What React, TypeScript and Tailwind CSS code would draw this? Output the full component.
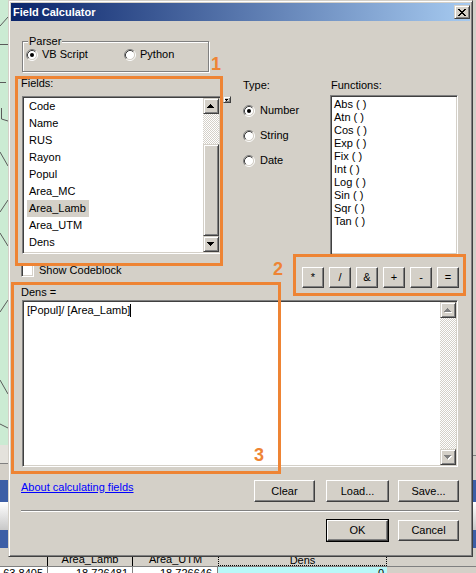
import React from "react";

const raised =
  "border border-t-white border-l-white border-r-[#404040] border-b-[#404040] shadow-[inset_-1px_-1px_0_#808080] bg-[#D4D0C8]";
const sbRaised =
  "border border-t-[#D4D0C8] border-l-[#D4D0C8] border-r-[#404040] border-b-[#404040] shadow-[inset_1px_1px_0_#ffffff,inset_-1px_-1px_0_#808080] bg-[#D4D0C8]";
const sunken =
  "border border-t-[#808080] border-l-[#808080] border-r-white border-b-white shadow-[inset_1px_1px_0_#404040,inset_-1px_-1px_0_#D4D0C8] p-px bg-white";
const hatch =
  "bg-[repeating-conic-gradient(#d4d0c8_0%_25%,#ffffff_0%_50%)] bg-size-[2px_2px]";

function Arrow({ dir, disabled }: { dir: "up" | "down"; disabled?: boolean }) {
  const d =
    dir === "up"
      ? "M3 0h1v1H3z M2 1h3v1H2z M1 2h5v1H1z M0 3h7v1H0z"
      : "M0 0h7v1H0z M1 1h5v1H1z M2 2h3v1H2z M3 3h1v1H3z";
  return (
    <svg width="8" height="5" viewBox="0 0 8 5" shapeRendering="crispEdges">
      {disabled && <path d={d} fill="#ffffff" transform="translate(1,1)" />}
      <path d={d} fill={disabled ? "#808080" : "#000000"} />
    </svg>
  );
}

function Radio({ checked }: { checked?: boolean }) {
  return (
    <svg width="12" height="12" viewBox="0 0 12 12" className="shrink-0">
      <circle cx="6" cy="6" r="4.5" fill="#ffffff" />
      <path d="M2.11 9.89A5.5 5.5 0 0 1 9.89 2.11" fill="none" stroke="#808080" />
      <path d="M9.89 2.11A5.5 5.5 0 0 1 2.11 9.89" fill="none" stroke="#ffffff" />
      <path d="M2.82 9.18A4.5 4.5 0 0 1 9.18 2.82" fill="none" stroke="#404040" />
      <path d="M9.18 2.82A4.5 4.5 0 0 1 2.82 9.18" fill="none" stroke="#D4D0C8" />
      {checked && <circle cx="6" cy="6" r="2" fill="#000000" />}
    </svg>
  );
}

function LeftStrip() {
  return (
    <div className="w-[8px] flex flex-col">
      <div className="h-[445px] bg-[#CBEBD3]">
        <svg width="8" height="445" viewBox="0 0 8 445">
          <g stroke="#5a5a5a" strokeWidth="1" fill="none">
            <path d="M0 26L8 17" />
            <path d="M0 44.5H8" />
            <path d="M0 82.5H6" />
            <path d="M1.5 108V119L8 121" />
            <path d="M0 152L8 166" />
            <path d="M8 200L0 212" />
            <path d="M0 233L8 246" />
            <path d="M8 300L0 312" />
            <path d="M0 380L8 394" />
            <path d="M0 424L8 428" />
          </g>
        </svg>
      </div>
      <div className="h-[18px] bg-[#E4E2DC]" />
      <div className="h-[1px] bg-[#808080]" />
      <div className="h-[16px] bg-[#D4D0C8]" />
      <div className="h-[22px] bg-[#3C5EA6]" />
      <div className="h-[28px] bg-[linear-gradient(to_bottom,#ffffff,#c8c8c8)]" />
      <div className="h-[18px] bg-[#3C5EA6]" />
      <div className="h-[9px] bg-[#D4D0C8]" />
    </div>
  );
}

function RightStrip() {
  return (
    <div className="w-[3px] flex flex-col">
      <div className="h-[455px] bg-[#D4D0C8]" />
      <div className="h-[1px] bg-[#808080]" />
      <div className="h-[24px] bg-[#D4D0C8]" />
      <div className="h-[22px] bg-[#3C5EA6]" />
      <div className="h-[28px] bg-[linear-gradient(to_bottom,#ffffff,#c8c8c8)]" />
      <div className="h-[18px] bg-[#3C5EA6]" />
      <div className="h-[9px] bg-[#D4D0C8]" />
    </div>
  );
}

const fields = ["Code", "Name", "RUS", "Rayon", "Popul", "Area_MC", "Area_Lamb", "Area_UTM", "Dens"];
const funcs = ["Abs ( )", "Atn ( )", "Cos ( )", "Exp ( )", "Fix ( )", "Int ( )", "Log ( )", "Sin ( )", "Sqr ( )", "Tan ( )"];
const ops = ["*", "/", "&", "+", "-", "="];

function Dialog() {
  return (
    <div className="w-[465px] h-[557px] flex flex-col bg-[#D4D0C8] border border-t-[#D4D0C8] border-l-[#D4D0C8] border-r-[#404040] border-b-[#404040] shadow-[inset_1px_1px_0_#ffffff,inset_-1px_-1px_0_#808080] p-[2px]">
      {/* title bar */}
      <div className="h-[18px] flex items-center pl-[2px] bg-[linear-gradient(to_right,#0a246a,#a6caf0)]">
        <span className="font-bold text-white">Field Calculator</span>
        <div className={`ml-auto w-[16px] h-[14px] ${sbRaised} flex items-center justify-center`}>
          <svg width="8" height="7" viewBox="0 0 8 7" shapeRendering="crispEdges">
            <path
              d="M0 0h2v1H0z M6 0h2v1H6z M1 1h2v1H1z M5 1h2v1H5z M2 2h4v1H2z M3 3h2v1H3z M2 4h4v1H2z M1 5h2v1H1z M5 5h2v1H5z M0 6h2v1H0z M6 6h2v1H6z"
              fill="#000000"
            />
          </svg>
        </div>
      </div>

      {/* body */}
      <div className="flex flex-col pl-[10px] pr-[11px]">
        {/* Parser group */}
        <div className="relative mt-[20px] ml-px w-[187px] h-[31px] border border-[#808080] shadow-[inset_1px_1px_0_#ffffff,1px_1px_0_#ffffff]">
          <span className="absolute left-[5px] -top-[7px] px-px bg-[#D4D0C8]">Parser</span>
          <div className="flex items-center pt-[6px] pl-[3px]">
            <div className="flex items-center gap-[4px] w-[98px]">
              <Radio checked />
              <span>VB Script</span>
            </div>
            <div className="flex items-center gap-[4px]">
              <Radio />
              <span>Python</span>
            </div>
          </div>
        </div>

        {/* fields / type / functions */}
        <div className="flex items-start mt-[5px]">
          <div className="w-[200px] flex flex-col">
            <div>Fields:</div>
            <div className={`mt-[6px] ml-px w-[199px] h-[158px] ${sunken} flex`}>
              <div className="flex-1 flex flex-col">
                {fields.map((f) => (
                  <div key={f} className="h-[17px] leading-[17px] pl-[3px]">
                    <span
                      className={`inline-block pl-[2px] pr-[3px] ${f === "Area_Lamb" ? "bg-[#D4D0C8]" : ""}`}
                    >
                      {f}
                    </span>
                  </div>
                ))}
              </div>
              <div className="w-[16px] flex flex-col">
                <div className={`h-[16px] ${sbRaised} flex items-center justify-center`}>
                  <Arrow dir="up" />
                </div>
                <div className={`h-[30px] ${hatch}`} />
                <div className={`h-[92px] ${sbRaised}`} />
                <div className={`h-[16px] ${sbRaised} flex items-center justify-center`}>
                  <Arrow dir="down" />
                </div>
              </div>
            </div>
          </div>

          <div className={`mt-[19px] ml-[2px] w-[8px] h-[7px] ${sbRaised} flex items-center justify-center`}>
            <svg width="4" height="2" viewBox="0 0 4 2" shapeRendering="crispEdges">
              <path d="M0 0h3v1H0z M1 1h1v1H1z" fill="#000000" />
            </svg>
          </div>

          <div className="ml-[12px] w-[87px] mt-[2px] flex flex-col">
            <div>Type:</div>
            {["Number", "String", "Date"].map((t, i) => (
              <div key={t} className="mt-[12px] h-[13px] flex items-center gap-[5px]">
                <Radio checked={i === 0} />
                <span>{t}</span>
              </div>
            ))}
          </div>

          <div className="w-[128px] mt-[2px] flex flex-col">
            <div className="pl-px">Functions:</div>
            <div className={`mt-[3px] h-[160px] ${sunken}`}>
              <div className="pl-[2px] pt-px flex flex-col">
                {funcs.map((f) => (
                  <div key={f} className="h-[13px]">
                    {f}
                  </div>
                ))}
              </div>
            </div>
          </div>
        </div>

        {/* codeblock + operators */}
        <div className="flex items-start">
          <div className="flex flex-col mt-[9px]">
            <div className="flex items-center h-[13px]">
              <div className={`w-[13px] h-[13px] ${sunken}`} />
              <span className="ml-[5px]">Show Codeblock</span>
            </div>
            <div className="mt-[9px]">Dens =</div>
          </div>
          <div className="ml-auto mt-[12px] flex gap-[5px]">
            {ops.map((o) => (
              <div key={o} className={`w-[22px] h-[21px] ${raised} flex items-center justify-center`}>
                {o}
              </div>
            ))}
          </div>
        </div>

        {/* expression */}
        <div className={`mt-px ml-px w-[436px] h-[167px] ${sunken} flex`}>
          <div className="flex-1 pl-[3px] pt-[2px] flex items-start">
            <span>[Popul]/ [Area_Lamb]</span>
            <span className="inline-block w-px h-[13px] bg-black" />
          </div>
          <div className="w-[16px] flex flex-col">
            <div className={`h-[16px] ${sbRaised} flex items-center justify-center`}>
              <Arrow dir="up" disabled />
            </div>
            <div className={`flex-1 ${hatch}`} />
            <div className={`h-[16px] ${sbRaised} flex items-center justify-center`}>
              <Arrow dir="down" disabled />
            </div>
          </div>
        </div>

        {/* link + clear/load/save */}
        <div className="flex items-start mt-[13px]">
          <span className="mt-px text-[#0000FF] underline">About calculating fields</span>
          <div className="ml-auto flex">
            <div className={`w-[61px] h-[22px] ${raised} flex items-center justify-center`}>Clear</div>
            <div className={`ml-[11px] w-[63px] h-[22px] ${raised} flex items-center justify-center`}>
              Load...
            </div>
            <div className={`ml-[9px] w-[61px] h-[22px] ${raised} flex items-center justify-center`}>
              Save...
            </div>
          </div>
        </div>

        {/* separator */}
        <div className="mt-[8px] h-[2px] border-t border-t-[#808080] border-b border-b-white" />

        {/* OK / Cancel */}
        <div className="flex justify-end items-start mt-[7px]">
          <div className="w-[63px] h-[23px] border border-black">
            <div className={`w-full h-full ${raised} flex items-center justify-center`}>OK</div>
          </div>
          <div className={`ml-[9px] mt-px w-[61px] h-[21px] ${raised} flex items-center justify-center`}>
            Cancel
          </div>
        </div>
      </div>
    </div>
  );
}

function BottomTable() {
  return (
    <div className="h-[16px] overflow-hidden bg-[#D4D0C8]">
      <div className="-mt-[4px]">
        <div className="flex h-[13px] bg-[#D4D0C8]">
          <div className="w-[48px] border-r border-r-black" />
          <div className="w-[85px] text-center border-r border-r-black">Area_Lamb</div>
          <div className="w-[85px] text-center">Area_UTM</div>
          <div className="w-[169px] text-center border border-dotted border-black">Dens</div>
        </div>
        <div className="flex h-[14px] border-t border-t-[#808080]">
          <div className="w-[48px] bg-white text-right pr-[4px] border-r border-r-[#808080]">63.8405</div>
          <div className="w-[85px] bg-white text-right pr-[4px] border-r border-r-[#808080]">18.726481</div>
          <div className="w-[85px] bg-white text-right pr-[5px] border-r border-r-[#808080]">18.726646</div>
          <div className="w-[169px] bg-[#B8F8F8] text-right pr-[3px]">0</div>
        </div>
      </div>
    </div>
  );
}

function Annotations() {
  return (
    <>
      <div className="absolute left-[15px] top-[76px] w-[208px] h-[190px] border-[3px] border-[#EE8434]" />
      <div className="absolute left-[293px] top-[254px] w-[173px] h-[42px] border-[3px] border-[#EE8434]" />
      <div className="absolute left-[11px] top-[282px] w-[270px] h-[192px] border-[3px] border-[#EE8434]" />
      <span className="absolute left-[211px] top-[55px] text-[18px] leading-[18px] font-bold text-[#EE8434]">1</span>
      <span className="absolute left-[273px] top-[260px] text-[18px] leading-[18px] font-bold text-[#EE8434]">2</span>
      <span className="absolute left-[254px] top-[446px] text-[18px] leading-[18px] font-bold text-[#EE8434]">3</span>
    </>
  );
}

export default function App() {
  return (
    <div className="relative w-[476px] h-[573px] overflow-hidden bg-[#D4D0C8] font-['Liberation_Sans',Arial,sans-serif] text-[11px] leading-[13px] text-black">
      <div className="flex h-[557px]">
        <LeftStrip />
        <Dialog />
        <RightStrip />
      </div>
      <BottomTable />
      <Annotations />
    </div>
  );
}
